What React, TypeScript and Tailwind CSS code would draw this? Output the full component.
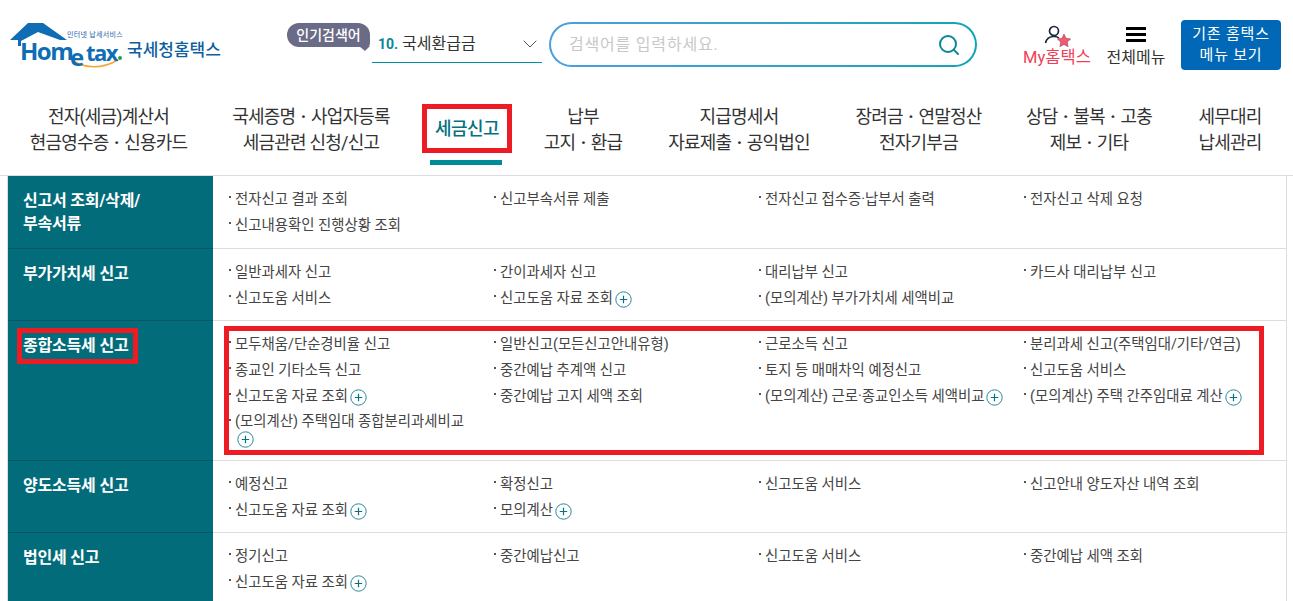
import { ChevronDown, Search } from "lucide-react";

const FONT = "font-['Roboto','Noto_Sans_CJK_KR',sans-serif]";

const Plus = () => (
  <svg width="17" height="17" viewBox="0 0 17 17" className="inline-block align-middle ml-[2px] my-[-2px]">
    <circle cx="8.5" cy="8.5" r="7.7" fill="none" stroke="#2b8797" strokeWidth="1" />
    <path d="M8.5 4.8v7.4M4.8 8.5h7.4" stroke="#04727f" strokeWidth="1.2" />
  </svg>
);

const navItems = [
  { lines: ["전자(세금)계산서", "현금영수증·신용카드"], c: "w-[157px]" },
  { lines: ["국세증명·사업자등록", "세금관련 신청/신고"], c: "w-[158px] ml-[45px]" },
  { lines: ["세금신고"], c: "w-[90px] ml-[32px]", active: true },
  { lines: ["납부", "고지·환급"], c: "w-[80px] ml-[31px]" },
  { lines: ["지급명세서", "자료제출·공익법인"], c: "w-[142px] ml-[45px]" },
  { lines: ["장려금·연말정산", "전자기부금"], c: "w-[127px] ml-[45px]" },
  { lines: ["상담·불복·고충", "제보·기타"], c: "w-[128px] ml-[43px]" },
  { lines: ["세무대리", "납세관리"], c: "w-[62px] ml-[46px]" },
];

type Item = { t: string; plus?: boolean };

const rows: { title: string[]; h: string; items: Item[]; boxed?: boolean }[] = [
  {
    title: ["신고서 조회/삭제/", "부속서류"],
    h: "h-[73px]",
    items: [
      { t: "전자신고 결과 조회" },
      { t: "신고부속서류 제출" },
      { t: "전자신고 접수증·납부서 출력" },
      { t: "전자신고 삭제 요청" },
      { t: "신고내용확인 진행상황 조회" },
    ],
  },
  {
    title: ["부가가치세 신고"],
    h: "h-[72px]",
    items: [
      { t: "일반과세자 신고" },
      { t: "간이과세자 신고" },
      { t: "대리납부 신고" },
      { t: "카드사 대리납부 신고" },
      { t: "신고도움 서비스" },
      { t: "신고도움 자료 조회", plus: true },
      { t: "(모의계산) 부가가치세 세액비교" },
    ],
  },
  {
    title: ["종합소득세 신고"],
    h: "h-[140px]",
    boxed: true,
    items: [
      { t: "모두채움/단순경비율 신고" },
      { t: "일반신고(모든신고안내유형)" },
      { t: "근로소득 신고" },
      { t: "분리과세 신고(주택임대/기타/연금)" },
      { t: "종교인 기타소득 신고" },
      { t: "중간예납 추계액 신고" },
      { t: "토지 등 매매차익 예정신고" },
      { t: "신고도움 서비스" },
      { t: "신고도움 자료 조회", plus: true },
      { t: "중간예납 고지 세액 조회" },
      { t: "(모의계산) 근로·종교인소득 세액비교", plus: true },
      { t: "(모의계산) 주택 간주임대료 계산", plus: true },
      { t: "(모의계산) 주택임대 종합분리과세비교", plus: true },
    ],
  },
  {
    title: ["양도소득세 신고"],
    h: "h-[72px]",
    items: [
      { t: "예정신고" },
      { t: "확정신고" },
      { t: "신고도움 서비스" },
      { t: "신고안내 양도자산 내역 조회" },
      { t: "신고도움 자료 조회", plus: true },
      { t: "모의계산", plus: true },
    ],
  },
  {
    title: ["법인세 신고"],
    h: "h-[72px]",
    items: [
      { t: "정기신고" },
      { t: "중간예납신고" },
      { t: "신고도움 서비스" },
      { t: "중간예납 세액 조회" },
      { t: "신고도움 자료 조회", plus: true },
    ],
  },
];

// 로고는 그림이라 내부만 absolute
const Logo = () => (
  <div className="w-[212px] h-[52px] relative shrink-0">
    <svg width="115" height="50" viewBox="0 0 115 50" className="absolute left-0 top-0">
      <path d="M0 18 L18 1 H33 L57 18 H50 L28 10 L11 19 V24 H8 V18 Z" fill="#0f6db5" />
      <path d="M63 39 Q85 51 108 38" fill="none" stroke="#f3a73a" strokeWidth="1.5" />
      <circle cx="110" cy="36" r="2" fill="#2e9b48" />
    </svg>
    <span className="absolute left-[57px] top-[9px] text-[7px] leading-[9px] text-[#1e62a8] tracking-[0.3px] whitespace-nowrap">인터넷 납세서비스</span>
    <span className="absolute left-[10px] top-[14px] text-[24px] leading-[30px] font-bold text-[#0f6db5] tracking-[-1.5px] font-['Open_Sans',sans-serif]">Hom</span>
    <span className="absolute left-[60px] top-[21px] text-[24px] leading-[28px] font-bold text-[#0f6db5] font-['Open_Sans',sans-serif]">e</span>
    <span className="absolute left-[76px] top-[16px] text-[22px] leading-[28px] font-bold text-[#0f6db5] tracking-[-1.5px] font-['Open_Sans',sans-serif]">tax</span>
    <span className="absolute left-[117px] top-[15px] text-[17px] leading-[26px] font-medium text-[#0f5f9f] whitespace-nowrap">국세청홈택스</span>
  </div>
);

const NavLine = ({ text }: { text: string }) => {
  const parts = text.split("·");
  return (
    <span>
      {parts.map((p, i) => (
        <span key={p}>
          {i > 0 && <span className="mx-[5.5px] font-bold">·</span>}
          {p}
        </span>
      ))}
    </span>
  );
};

export default function App() {
  return (
    <div className={`${FONT} w-[1293px] h-[601px] overflow-hidden bg-white text-[#333]`}>
      <header className="flex items-start h-[90px] pl-[10px] pt-[22px]">
        <Logo />
        <div className="ml-[65px] w-[255px] relative pt-[13px]">
          <span className="absolute left-0 top-[1px] bg-[#6a6b86] text-white text-[14px] leading-[24px] font-medium rounded-[12px] rounded-br-[4px] w-[83px] text-center">인기검색어</span>
          <span className="absolute left-[72px] top-[24px] w-0 h-0 border-l-[6px] border-l-transparent border-t-[5px] border-t-[#6a6b86] border-r-[5px] border-r-transparent" />
          <div className="ml-[85px] w-[170px] h-[30px] mt-[-2px] border-b border-[#00909e] flex items-center justify-between pl-[6px] pr-0 pb-[7px] text-[16px]">
            <span className="whitespace-nowrap"><b className="text-[#0a8797] font-bold text-[14px]">10.</b> 국세환급금</span>
            <ChevronDown size={24} strokeWidth={1} className="text-[#555]" />
          </div>
        </div>
        <div className="ml-[7px] w-[428px] h-[45px] rounded-[23px] p-[2px] bg-linear-to-r from-[#4a9fe0] to-[#10a4b8]">
          <div className="w-full h-full rounded-[21px] bg-white flex items-center justify-between pl-[18px] pr-[14px]">
            <span className="text-[16px] text-[#c8c8c8] tracking-[0.8px]">검색어를 입력하세요.</span>
            <Search size={24} strokeWidth={2} className="text-[#0b8797]" />
          </div>
        </div>
        <div className="ml-[46px] flex flex-col items-center w-[68px]">
          <svg width="27" height="24" viewBox="0 0 27 24" className="mt-[2px]">
            <circle cx="10" cy="7" r="4.5" fill="none" stroke="#1c2540" strokeWidth="1.7" />
            <path d="M1.500 19C2.500 14.500 6 12.500 10 12.500c2 0 4 .5 5 1.500" fill="none" stroke="#1c2540" strokeWidth="1.7" />
            <polygon points="20,10 22.100,14.300 26.700,14.900 23.300,18 24.100,22.700 20,20.400 15.900,22.700 16.700,18 13.300,14.900 17.900,14.300" fill="#f25a74" stroke="#5a2638" strokeWidth="0.4" />
          </svg>
          <span className="text-[16.5px] leading-[20px] text-[#ef3e56] whitespace-nowrap">My홈택스</span>
        </div>
        <div className="ml-[14px] flex flex-col items-center w-[62px]">
          <div className="flex flex-col gap-[3px] mt-[5px] w-[20px]">
            <div className="h-[3px] bg-black" />
            <div className="h-[3px] bg-black" />
            <div className="h-[3px] bg-black" />
          </div>
          <span className="text-[16px] leading-[20px] mt-[6px] whitespace-nowrap text-[#333]">전체메뉴</span>
        </div>
        <div className="ml-[14px] mt-[-2px] w-[100px] h-[50px] rounded-[4px] bg-[#0068b7] text-white text-[15px] leading-[21px] tracking-[0.8px] text-center flex items-center justify-center">
          <div>기존 홈택스<br />메뉴 보기</div>
        </div>
      </header>

      <nav className="h-[86px] border-b border-[#ddd] flex items-start pl-[30px] pt-[14px]">
        {navItems.map((n) =>
          n.active ? (
            <div key={n.lines[0]} className={`${n.c} flex flex-col items-center shrink-0`}>
              <div className="w-[90px] h-[49px] border-[5px] border-[#ed1c24] flex items-center justify-center text-[18px] font-medium text-[#04727f] tracking-[-0.5px]">{n.lines[0]}</div>
              <div className="w-[72px] h-[5px] bg-[#008b99] mt-[7px] -translate-x-px" />
            </div>
          ) : (
            <div key={n.lines[0]} className={`${n.c} shrink-0 text-center text-[18px] leading-[26px] text-[#333] tracking-[-0.8px] whitespace-nowrap flex flex-col items-center`}>
              {n.lines.map((l) => <NavLine key={l} text={l} />)}
            </div>
          ),
        )}
      </nav>

      <div className="ml-[7px] w-[1280px] border-x border-[#ddd]">
        {rows.map((r) => (
          <div key={r.title[0]} className={`${r.h} flex border-b border-[#ddd] relative`}>
            <div className="w-[205px] shrink-0 bg-[#036c7a] border-b border-[#0b5560] mb-[-1px] pl-[15px] pt-[13px] text-white text-[16px] leading-[23px] font-bold tracking-[-0.2px]">
              {r.boxed ? (
                <span className="inline-block border-[5px] border-[#ed1c24] pl-px pr-[5px] ml-[-6px] mt-[-9px] leading-[26px] whitespace-nowrap">{r.title[0]}</span>
              ) : (
                r.title.map((l) => <div key={l}>{l}</div>)
              )}
            </div>
            <div className="grid grid-cols-[265px_265px_265px_1fr] w-[1074px] pl-[15px] pt-[11px] auto-rows-[26px] text-[14.4px] leading-[26px] text-[#444]">
              {r.items.map((it) => {
                const wrapped = it.t.includes("종합분리");
                return (
                  <div key={it.t} className={wrapped ? "flex w-[244px] h-[52px] leading-[18px] pt-[3px]" : "flex whitespace-nowrap"}>
                    <span className="w-[7px] shrink-0 pl-px">
                      <span className={wrapped ? "block w-[2px] h-[2px] bg-[#555] mt-[6px]" : "block w-[2px] h-[2px] bg-[#555] mt-[9px]"} />
                    </span>
                    <span className={wrapped ? "[&>svg]:-translate-y-px" : ""}>{it.t}{it.plus && <Plus />}</span>
                  </div>
                );
              })}
            </div>
            {r.boxed && <div className="absolute left-[216px] top-[5px] w-[1040px] h-[129px] border-[5px] border-[#ed1c24] pointer-events-none" />}
          </div>
        ))}
      </div>
    </div>
  );
}
